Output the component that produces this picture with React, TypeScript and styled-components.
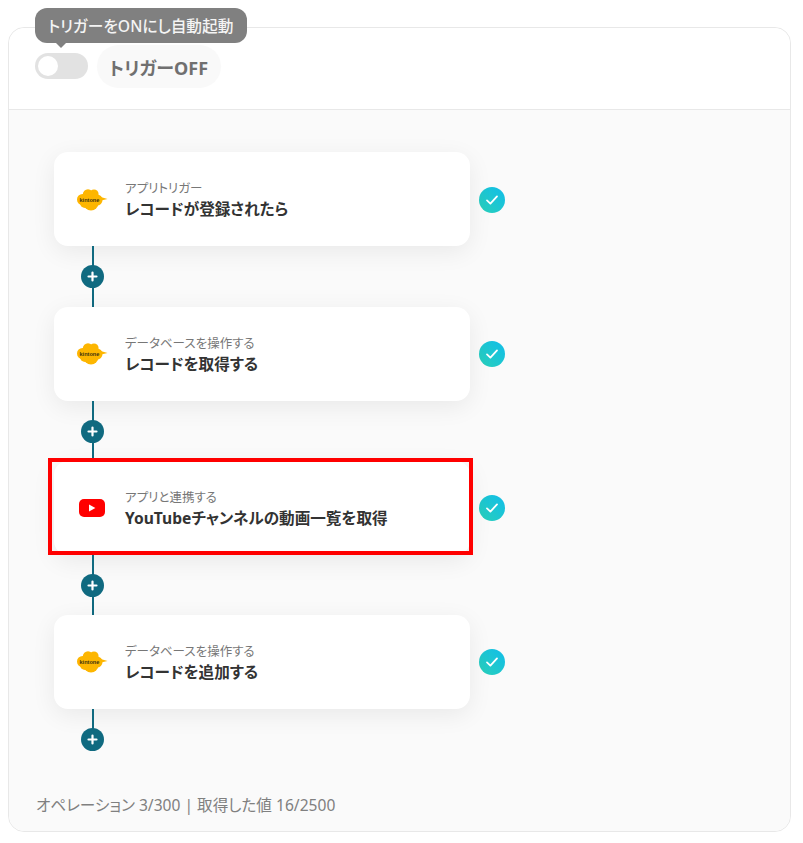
import styled, { createGlobalStyle } from "styled-components";

const GlobalStyle = createGlobalStyle`
  html, body {
    margin: 0;
    padding: 0;
    background: #fff;
    font-family: "Noto Sans", "Noto Sans CJK JP", sans-serif;
    font-feature-settings: "palt";
  }
`;

const Page = styled.div`
  padding: 27px 12px 0 8px;
`;

const Panel = styled.section`
  height: 805px;
  box-sizing: border-box;
  border: 1px solid #e8e8e8;
  border-radius: 16px;
  display: flex;
  flex-direction: column;
  overflow: visible;
`;

const Header = styled.header`
  position: relative;
  height: 82px;
  box-sizing: border-box;
  flex: none;
  padding: 17px 0 0 26px;
  display: flex;
  align-items: flex-start;
  gap: 9px;
  background: #fff;
  border-bottom: 1px solid #e8e8e8;
  border-radius: 16px 16px 0 0;
`;

const Tooltip = styled.div`
  position: absolute;
  left: 26px;
  top: -20px;
  height: 35px;
  padding: 0 14px 0 13px;
  display: flex;
  align-items: center;
  border-radius: 12px;
  background: #808080;
  color: #f4f4f4;
  font-size: 15.7px;
  font-weight: 500;
  white-space: nowrap;

  &::after {
    content: "";
    position: absolute;
    left: 21px;
    bottom: -5px;
    border-left: 5px solid transparent;
    border-right: 5px solid transparent;
    border-top: 5px solid #808080;
  }
`;

const Toggle = styled.div`
  width: 53px;
  height: 26px;
  margin-top: 8px;
  border-radius: 13px;
  background: #e2e2e2;
  display: flex;
  align-items: center;
  padding-left: 3px;
  box-sizing: border-box;
  flex: none;

  &::before {
    content: "";
    width: 20px;
    height: 20px;
    border-radius: 50%;
    background: #fff;
  }
`;

const TriggerLabel = styled.div`
  height: 43px;
  padding: 0 13px 0 12px;
  display: flex;
  align-items: center;
  border-radius: 22px;
  background: #f9f9f9;
  color: #707070;
  font-size: 18px;
  font-weight: 700;
`;

const Body = styled.div`
  flex: 1;
  background: #fafafa;
  border-radius: 0 0 16px 16px;
  padding: 42.4px 0 0 45px;
  display: flex;
  flex-direction: column;
`;

const Flow = styled.div`
  display: flex;
  flex-direction: column;
  flex: 1;
`;

const StepRow = styled.div`
  display: flex;
  align-items: center;
  gap: 9px;
`;

const Card = styled.div<{ $marked?: boolean }>`
  position: relative;
  width: 416px;
  height: 94px;
  box-sizing: border-box;
  padding: 1px 0 0 22px;
  display: flex;
  align-items: center;
  gap: 17px;
  background: #fff;
  border-radius: 14px;
  box-shadow: 0 6px 24px rgba(0, 0, 0, 0.07);

  ${(p) =>
    p.$marked &&
    `
    &::after {
      content: "";
      position: absolute;
      left: -6px;
      top: -3px;
      right: -3px;
      bottom: 0;
      border: 4px solid #f00;
    }
  `}
`;

const LogoBox = styled.div`
  width: 32px;
  display: flex;
  justify-content: center;
  flex: none;
`;

const CardText = styled.div`
  display: flex;
  flex-direction: column;
  gap: 1px;
  margin-top: 2px;
`;

const Kind = styled.span`
  font-size: 12.5px;
  line-height: 16px;
  color: #777;
`;

const Title = styled.span`
  font-size: 15.6px;
  line-height: 22px;
  font-weight: 700;
  color: #333;
`;

const Connector = styled.div<{ $last?: boolean }>`
  width: 23px;
  height: ${(p) => (p.$last ? "41px" : "60.2px")};
  margin-left: 27px;
  position: relative;
  display: flex;
  flex-direction: column;
  align-items: center;
  flex: none;

  &::before {
    content: "";
    width: 2px;
    height: ${(p) => (p.$last ? "20px" : "60.2px")};
    background: #106a80;
  }
`;

const PlusButton = styled.div`
  position: absolute;
  left: 0;
  top: 19px;
  width: 23px;
  height: 23px;
  border-radius: 50%;
  background: #106a80;
  display: flex;
  align-items: center;
  justify-content: center;
`;

const CheckBadge = styled.div`
  width: 26px;
  height: 26px;
  margin-top: 1px;
  border-radius: 50%;
  background: linear-gradient(45deg, #2ad0b8, #10bdea);
  display: flex;
  align-items: center;
  justify-content: center;
`;

const Usage = styled.footer`
  font-size: 15.6px;
  line-height: 20px;
  color: #808080;
  margin: 0 0 16px -18px;
`;

const KintoneLogo = () => (
  <svg width="32" height="24" viewBox="0 0 32 24">
    <g fill="#fdb600">
      <circle cx="6.5" cy="11.5" r="5.5" />
      <circle cx="12" cy="6.5" r="5.2" />
      <circle cx="18" cy="6" r="4.6" />
      <circle cx="21" cy="12" r="5.5" />
      <circle cx="15" cy="15" r="7.5" />
      <circle cx="9" cy="15" r="5" />
      <path d="M23 8.5l8.5 2.5-8.5 2z" />
    </g>
    <text x="3.5" y="13.6" fontSize="5.6" fontWeight="700" fill="#3f3410" fontFamily="'Liberation Sans', sans-serif">
      kintone
    </text>
  </svg>
);

const YoutubeLogo = () => (
  <svg width="26" height="18" viewBox="0 0 26 18">
    <rect x="0" y="0" width="26" height="18" rx="5" fill="#f00" />
    <path d="M10 5.6v6.8l6.4-3.4z" fill="#fff" />
  </svg>
);

const CheckIcon = () => (
  <svg width="14" height="12" viewBox="0 0 14 12" fill="none">
    <path d="M2 6.4l3.4 3.2L12 2.4" stroke="#fff" strokeWidth="1.8" strokeLinecap="round" strokeLinejoin="round" />
  </svg>
);

const PlusIcon = () => (
  <svg width="11" height="11" viewBox="0 0 11 11" fill="none">
    <path d="M5.5 1.5v8M1.5 5.5h8" stroke="#fff" strokeWidth="2.2" strokeLinecap="round" />
  </svg>
);

const steps = [
  { kind: "アプリトリガー", title: "レコードが登録されたら", app: "kintone" },
  { kind: "データベースを操作する", title: "レコードを取得する", app: "kintone" },
  { kind: "アプリと連携する", title: "YouTubeチャンネルの動画一覧を取得", app: "youtube", marked: true },
  { kind: "データベースを操作する", title: "レコードを追加する", app: "kintone" },
];

export default function App() {
  return (
    <Page>
      <GlobalStyle />
      <Panel>
        <Header>
          <Tooltip>トリガーをONにし自動起動</Tooltip>
          <Toggle />
          <TriggerLabel>トリガーOFF</TriggerLabel>
        </Header>
        <Body>
          <Flow>
            {steps.map((step, i) => (
              <div key={i}>
                <StepRow>
                  <Card $marked={step.marked}>
                    <LogoBox>{step.app === "kintone" ? <KintoneLogo /> : <YoutubeLogo />}</LogoBox>
                    <CardText>
                      <Kind>{step.kind}</Kind>
                      <Title>{step.title}</Title>
                    </CardText>
                  </Card>
                  <CheckBadge>
                    <CheckIcon />
                  </CheckBadge>
                </StepRow>
                <Connector $last={i === steps.length - 1}>
                  <PlusButton>
                    <PlusIcon />
                  </PlusButton>
                </Connector>
              </div>
            ))}
          </Flow>
          <Usage>オペレーション 3/300 | 取得した値 16/2500</Usage>
        </Body>
      </Panel>
    </Page>
  );
}
